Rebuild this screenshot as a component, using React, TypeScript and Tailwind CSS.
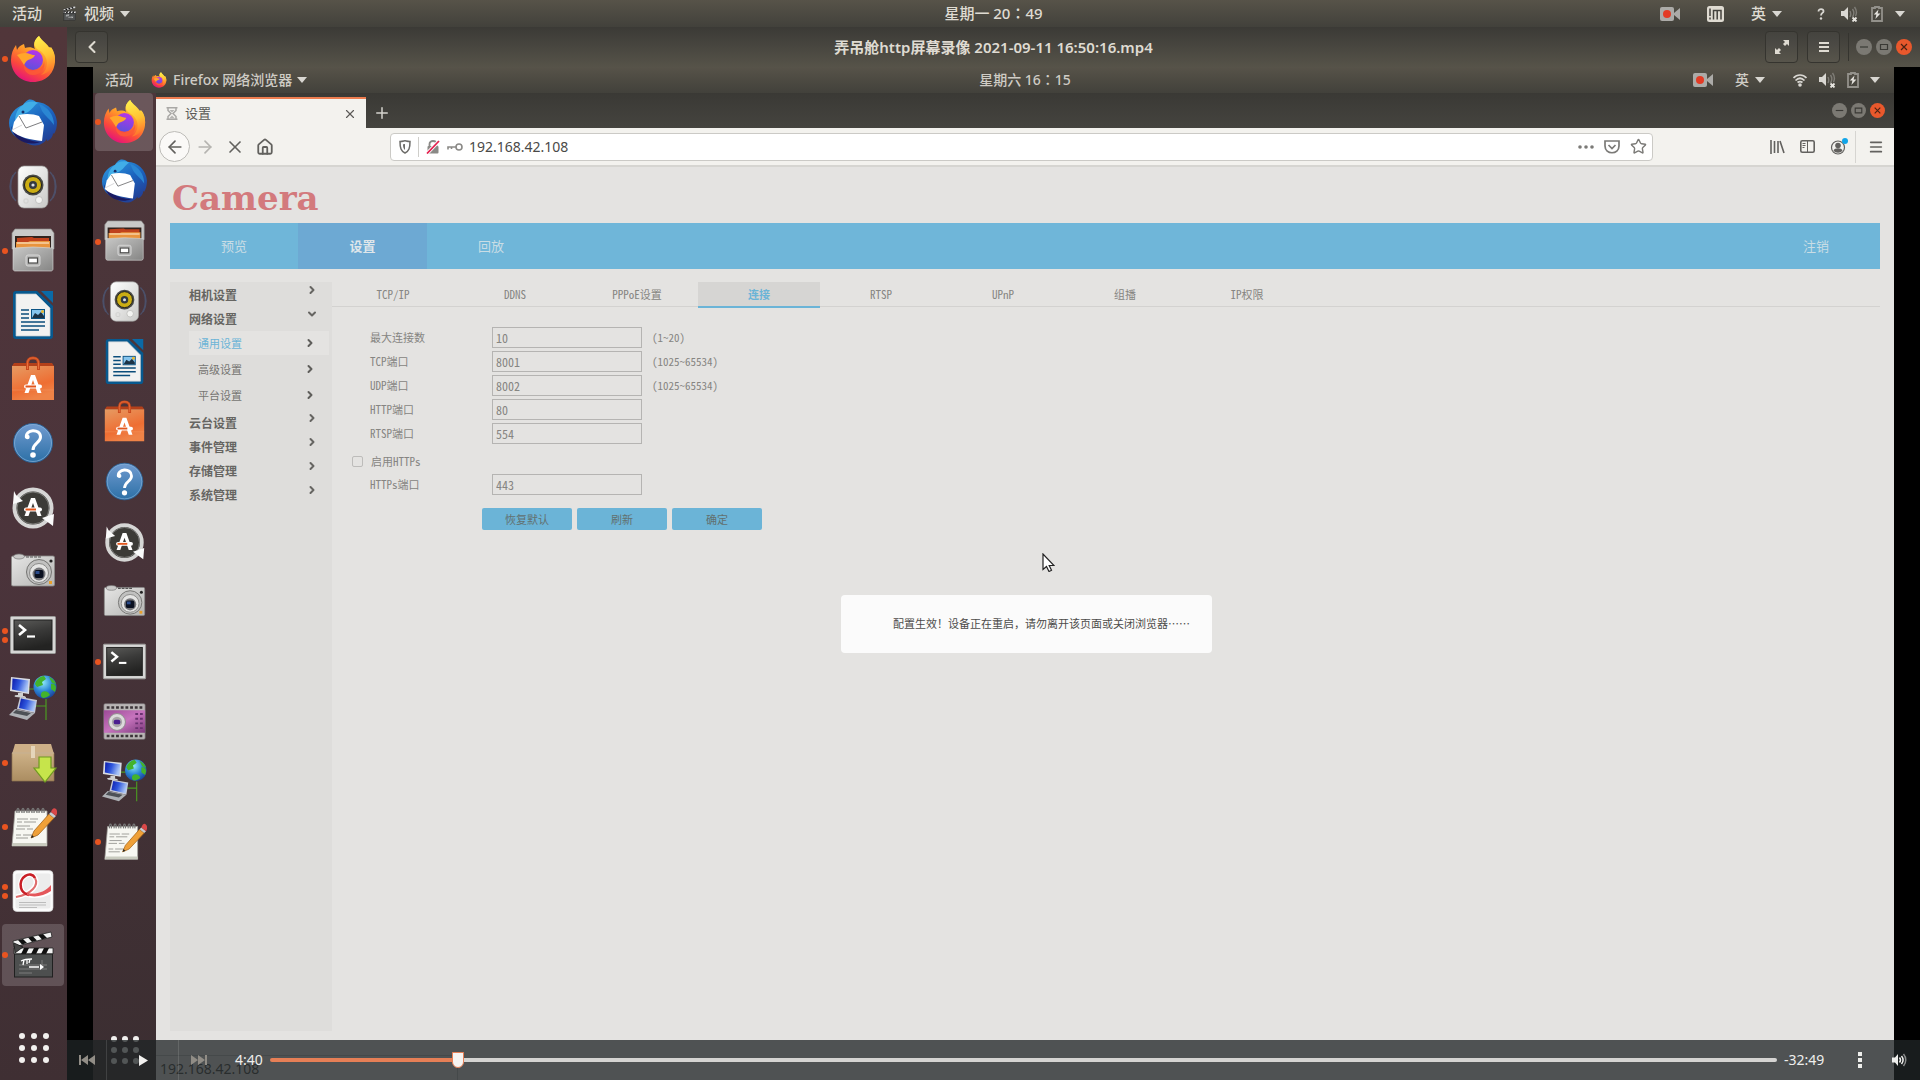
import type { ReactNode } from "react";
import {
  ArrowLeft,
  ArrowRight,
  ChevronDown,
  ChevronLeft,
  ChevronRight,
  House,
  Menu,
  Plus,
  Star,
  X,
} from "lucide-react";

function Icon48({ children }: { children: ReactNode }) {
  return (
    <svg viewBox="0 0 48 48" className="h-full w-full" aria-hidden="true">
      {children}
    </svg>
  );
}

function FirefoxIcon() {
  return (
    <Icon48>
      <defs>
        <linearGradient id="ffBody" x1="0.75" y1="0.1" x2="0.3" y2="1">
          <stop offset="0" stopColor="#ffe14a" />
          <stop offset="0.35" stopColor="#ff9a28" />
          <stop offset="0.7" stopColor="#fb4a3b" />
          <stop offset="1" stopColor="#e3107e" />
        </linearGradient>
        <linearGradient id="ffGlobe" x1="0.6" y1="0" x2="0.3" y2="1">
          <stop offset="0" stopColor="#b634e8" />
          <stop offset="1" stopColor="#5b52dd" />
        </linearGradient>
        <linearGradient id="ffFlame" x1="0" y1="0" x2="0.2" y2="1">
          <stop offset="0" stopColor="#fff44f" />
          <stop offset="0.6" stopColor="#ffc233" />
          <stop offset="1" stopColor="#ff7a2d" />
        </linearGradient>
      </defs>
      <path d="M24 47C11 47 2 37 2 25c0-6 2-11 5-15l1 5c1-3 4-5 7-6l1 4c3-1 7-1 10 1-2-4-1-9 4-13 2 5 7 7 9 12l2-1c4 4 5 9 5 13 0 13-9 22-22 22z" fill="url(#ffBody)" />
      <path d="M30 1c-5 4-6 9-2 13 6 3 10 8 10 14 0 5-2 9-6 12 8-2 13-8 14-15 0-5-1-9-4-13l-1 2C39 9 33 6 30 1z" fill="url(#ffFlame)" />
      <circle cx="24" cy="25" r="10" fill="url(#ffGlobe)" />
      <path d="M8 20c4-2 9-3 13-1 2 1 4 1 5 1-1 3-4 4-7 5-2 1-3 3-4 5-2-3-4-7-7-10z" fill="#ffa62b" />
      <path d="M15 29c2 6 8 8 13 6 4-1 7-5 7-9 2 7-3 14-11 14-6 0-10-5-9-11z" fill="#fb5a36" opacity="0.85" />
    </Icon48>
  );
}

function MailIcon() {
  return (
    <Icon48>
      <defs>
        <linearGradient id="tbBlue" x1="0.2" y1="0" x2="0.8" y2="1">
          <stop offset="0" stopColor="#2f9ae0" />
          <stop offset="0.5" stopColor="#1b62bd" />
          <stop offset="1" stopColor="#243a8f" />
        </linearGradient>
      </defs>
      <path d="M19 1c3-1 6 0 8 2 11 0 20 9 21 20 0 5-1 9-3 12l-1-1c0 4-3 7-6 8l0-2c-2 3-5 5-8 6-5 1-10 0-14-3C6 39 0 33 0 24 0 15 7 8 14 6c1-2 3-4 5-5z" fill="url(#tbBlue)" />
      <path d="M14 6c3-3 9-5 15-2-4 2-5 6-10 9-4 2-9 3-13 9 0-7 3-13 8-16z" fill="#41aee8" />
      <path d="M30 5c9 3 15 11 15 21-4-6-9-9-12-14z" fill="#2a86d3" />
      <path d="M2 27c4 9 15 15 29 16-10 4-26 1-29-16z" fill="#1a1a62" />
      <path d="M5 23l5-7c7-2 15-1 20 1l5 9-2 16C22 41 9 38 3 32z" fill="#fff" />
      <path d="M10 17l7 12 16-6" fill="none" stroke="#6d6d70" strokeWidth="0.9" />
      <path d="M3 31l10-5" fill="none" stroke="#c9c9cc" strokeWidth="0.8" />
      <circle cx="14" cy="13" r="1.5" fill="#16306d" />
    </Icon48>
  );
}

function MusicIcon() {
  return (
    <Icon48>
      <defs>
        <linearGradient id="spkBody" x1="0" y1="0" x2="1" y2="1">
          <stop offset="0" stopColor="#fff" />
          <stop offset="1" stopColor="#c9c9c7" />
        </linearGradient>
      </defs>
      <path d="M7 9C0 16 0 31 7 38M4 12c-4 7-4 16 0 23M41 9c7 7 7 22 0 29M44 12c4 7 4 16 0 23" fill="none" stroke="#4d668f" strokeWidth="1.4" opacity="0.55" />
      <rect x="9" y="3" width="30" height="42" rx="6" fill="url(#spkBody)" stroke="#9a9a98" strokeWidth="0.7" />
      <circle cx="24" cy="22" r="10.5" fill="#4b4c48" />
      <circle cx="24" cy="22" r="8.5" fill="#cbad13" stroke="#20201c" strokeWidth="1" />
      <circle cx="24" cy="22" r="4" fill="#333a40" />
      <circle cx="24" cy="22" r="1.6" fill="#dce2e5" />
      <circle cx="30" cy="37" r="3.5" fill="#f3f3f1" stroke="#b9b9b7" strokeWidth="0.8" />
      <rect x="15" y="36" width="4" height="4" rx="1" fill="none" stroke="#d0d0ce" />
    </Icon48>
  );
}

function FilesIcon() {
  return (
    <Icon48>
      <defs>
        <linearGradient id="fileBody" x1="0" y1="0" x2="1" y2="1">
          <stop offset="0" stopColor="#c8c8c7" />
          <stop offset="1" stopColor="#858584" />
        </linearGradient>
      </defs>
      <path d="M6 2h36l3 4v16H3V6z" fill="#c9c9c8" stroke="#8b8b8a" strokeWidth="0.7" />
      <path d="M6 9h36v12H6z" fill="#30231e" />
      <path d="M8 11l15-1 2 1h15v4H8z" fill="#c0421d" />
      <path d="M7 15h12l2-1h20v7H7z" fill="#e9943d" />
      <path d="M8 16h32" stroke="#fff3df" strokeWidth="1" />
      <path d="M4 21l20-1 20 1v21c0 1-1 2-2 2H6c-1 0-2-1-2-2z" fill="url(#fileBody)" stroke="#dcdcdb" strokeWidth="0.6" />
      <rect x="17" y="28" width="14" height="11" rx="2" fill="#b5b5b4" stroke="#d8d8d7" />
      <rect x="19.5" y="31" width="9" height="5" fill="#fff" stroke="#4b4b4a" strokeWidth="1.2" />
    </Icon48>
  );
}

function WriterIcon() {
  return (
    <Icon48>
      <path d="M7 0h21l16 15v30c0 2-1 3-3 3H7c-2 0-3-1-3-3V3c0-2 1-3 3-3z" fill="#07598f" />
      <path d="M32 0h12v12z" fill="#0b6aa6" />
      <path d="M7 3h20l14 14v28H7z" fill="#f2f2f1" stroke="#c4c8cb" strokeWidth="0.7" />
      <path d="M12 19h8M12 23h8M12 27h8M12 31h24M12 35h24M12 39h18" stroke="#0b4d7b" strokeWidth="1.7" />
      <rect x="22.5" y="18.5" width="13" height="9" fill="#86c5ee" stroke="#0b5384" />
      <path d="M23 27l3-5 3 2 3-3 3 4v2z" fill="#1c3346" />
      <circle cx="33.5" cy="20.5" r="1.5" fill="#eab82c" />
    </Icon48>
  );
}

function LetterA() {
  return (
    <>
      <path d="M22 19h4L32.500 37h-4L24 24l-4.500 13h-4z" fill="#fff" />
      <rect x="15" y="28.500" width="18" height="4" rx="2" fill="#fff" />
      <rect x="16.5" y="29.500" width="10.5" height="2" fill="#e3561c" />
    </>
  );
}

function SoftwareIcon() {
  return (
    <Icon48>
      <defs>
        <linearGradient id="bagBody" x1="0" y1="0" x2="0.4" y2="1">
          <stop offset="0" stopColor="#e69b63" />
          <stop offset="0.7" stopColor="#ee6e33" />
          <stop offset="1" stopColor="#ef8347" />
        </linearGradient>
      </defs>
      <path d="M5 8h38l2 3H3z" fill="#b3401a" />
      <path d="M3 11h42v34H3z" fill="url(#bagBody)" />
      <path d="M18.500 15V9c0-5 2-6 5.500-6s5.500 1 5.500 6v6" fill="none" stroke="#c8481c" strokeWidth="3" />
      <path d="M18.500 14V9c0-5 2-6 5.500-6s5.500 1 5.500 6v5" fill="none" stroke="#e86e3a" strokeWidth="1" />
      <path d="M3 35h42" stroke="#f39560" strokeWidth="0.5" />
      <g transform="translate(0 1)">
        <LetterA />
      </g>
    </Icon48>
  );
}

function HelpIcon() {
  return (
    <Icon48>
      <defs>
        <linearGradient id="helpBody" x1="0" y1="0" x2="0" y2="1">
          <stop offset="0" stopColor="#719bd0" />
          <stop offset="1" stopColor="#2c70a6" />
        </linearGradient>
      </defs>
      <circle cx="24" cy="24" r="19.5" fill="url(#helpBody)" stroke="#2b5f92" />
      <circle cx="24" cy="24" r="18.5" fill="none" stroke="#86b2da" strokeWidth="0.7" />
      <path d="M17.500 19c-2-9 14-10 14-1 0 6-7.500 6-7.500 13" fill="none" stroke="#fff" strokeWidth="3" />
      <circle cx="18.500" cy="18" r="2.2" fill="#fff" />
      <circle cx="24" cy="36" r="2.8" fill="#fff" />
    </Icon48>
  );
}

function UpdaterIcon() {
  return (
    <Icon48>
      <circle cx="24" cy="25" r="18.500" fill="#3c3b37" stroke="#d6d6d5" strokeWidth="4" />
      <circle cx="24" cy="25" r="16" fill="none" stroke="#8a8a88" strokeWidth="0.8" />
      <path d="M5 8l2 4 7 6-3 1-7 2z" fill="#fafafa" />
      <path d="M45 31l-1 12-4-3-7-5z" fill="#fafafa" />
      <g transform="translate(0 -4)">
        <LetterA />
      </g>
    </Icon48>
  );
}

function CameraIcon() {
  return (
    <Icon48>
      <defs>
        <linearGradient id="camBody" x1="0" y1="0" x2="1" y2="1">
          <stop offset="0" stopColor="#e6e6e5" />
          <stop offset="1" stopColor="#b4b4b2" />
        </linearGradient>
      </defs>
      <rect x="2.500" y="9" width="43" height="30" rx="1.5" fill="url(#camBody)" stroke="#8a8a88" strokeWidth="0.8" />
      <ellipse cx="10" cy="9.5" rx="5.5" ry="2.5" fill="#c9c9c8" stroke="#777" strokeWidth="0.7" />
      <path d="M17 10h15" stroke="#555" strokeWidth="1.2" strokeDasharray="3 1" />
      <circle cx="30" cy="25" r="12.5" fill="#c1c1c0" stroke="#747472" />
      <circle cx="30" cy="26" r="9.5" fill="#e5e5e4" stroke="#8b8b89" />
      <circle cx="30" cy="27" r="6.5" fill="#77777a" />
      <rect x="25.5" y="23" width="9" height="8" rx="2" fill="#0a1020" />
      <rect x="26.5" y="24" width="4" height="3" fill="#2a4b8a" />
      <circle cx="42" cy="14" r="1.6" fill="#222" />
      <rect x="40" y="34" width="3" height="3" fill="#e9a02b" />
    </Icon48>
  );
}

function TerminalIcon() {
  return (
    <Icon48>
      <defs>
        <linearGradient id="termBody" x1="0" y1="0" x2="0.3" y2="1">
          <stop offset="0" stopColor="#5a5a58" />
          <stop offset="0.5" stopColor="#3a3a39" />
          <stop offset="1" stopColor="#232322" />
        </linearGradient>
      </defs>
      <rect x="1.5" y="5.5" width="45" height="37" rx="1" fill="#d6d6d5" stroke="#9a9a98" />
      <rect x="5" y="9" width="38" height="30" fill="url(#termBody)" stroke="#1f1f1e" />
      <path d="M10 14l6 5-6 5" fill="none" stroke="#fff" strokeWidth="2.6" />
      <path d="M18 25.5h8" stroke="#fff" strokeWidth="2.2" />
    </Icon48>
  );
}

function NetworkIcon() {
  return (
    <Icon48>
      <defs>
        <linearGradient id="netScreen" x1="0" y1="0" x2="1" y2="0.3">
          <stop offset="0" stopColor="#0a18a8" />
          <stop offset="0.5" stopColor="#2f57dd" />
          <stop offset="1" stopColor="#a9c4f5" />
        </linearGradient>
        <radialGradient id="netGlobe" cx="0.4" cy="0.3" r="0.8">
          <stop offset="0" stopColor="#8feaf7" />
          <stop offset="0.5" stopColor="#2c86d6" />
          <stop offset="1" stopColor="#17348d" />
        </radialGradient>
      </defs>
      <path d="M18 14h7M37 24v21M27 31h10" stroke="#4b9a22" strokeWidth="1.2" fill="none" />
      <path d="M2 2l19 2-1 15-19-3z" fill="#d8dbe2" />
      <path d="M3.5 3.5l16 2-1 12-15.5-3z" fill="url(#netScreen)" />
      <path d="M9 18h5v3c3 0 4 2 2 2l-9-1c-3-1-1-2 2-2z" fill="#cfd0d0" />
      <path d="M11 22l17 3-2 13-18-4z" fill="#c5cad8" />
      <path d="M12 23.5l15 3-2 10-15-3.5z" fill="url(#netScreen)" />
      <path d="M6 34l20 4-8 7-18-5z" fill="#aeb1b5" />
      <path d="M7 35l15 3-4 3-14-3z" fill="#4d5156" />
      <circle cx="36" cy="12" r="11.5" fill="url(#netGlobe)" />
      <path d="M26 9c1-4 5-8 9-8l2 3-4 3 1 3-6 2zM40 2c3 1 6 4 7 7l-4-1zM33 17c3-2 7 0 8 3-2 2-5 3-7 3-2-1-3-3-1-6zM42 9c3-1 5 1 5 4l-1 4-4-3z" fill="#43b32b" />
    </Icon48>
  );
}

function PackageIcon() {
  return (
    <Icon48>
      <defs>
        <linearGradient id="pkgBody" x1="0" y1="0" x2="0" y2="1">
          <stop offset="0" stopColor="#cdb187" />
          <stop offset="1" stopColor="#ab8d61" />
        </linearGradient>
      </defs>
      <path d="M6 5h36l3 10H3z" fill="#cdaf87" />
      <path d="M3 14h42v28H3z" fill="url(#pkgBody)" stroke="#917650" strokeWidth="0.7" />
      <path d="M3 14h42" stroke="#e4d1b2" strokeWidth="0.8" />
      <path d="M22 7h4v12h-4z" fill="#e5d5ba" />
      <path d="M30 18h12v11h5L36 43 25 29h5z" fill="#c6e44b" stroke="#6f9a21" strokeWidth="1.2" />
    </Icon48>
  );
}

function NotesIcon() {
  return (
    <Icon48>
      <path d="M6 8h32v35H3z" fill="#f7f7f2" stroke="#a3a39d" strokeWidth="0.8" />
      <path d="M4 40h34v3H3z" fill="#c9cbbf" />
      <path d="M8 10c-1-6 3-6 2 0M13 10c-1-6 3-6 2 0M18 10c-1-6 3-6 2 0M23 10c-1-6 3-6 2 0M28 10c-1-6 3-6 2 0M33 10c-1-6 3-6 2 0" fill="none" stroke="#777" strokeWidth="1.3" />
      <path d="M8 16h11m2 0h8M8 19h5m2 0h12M8 23h13M7 26h9m2 0h6M7 32h5m2 0h12M7 35h12" stroke="#9c9c97" strokeWidth="1" />
      <path d="M22 35l3-7 15-17 5 4-16 17z" fill="#efa038" stroke="#a5651a" strokeWidth="0.8" />
      <path d="M40 11l2-2 5 4-2 2z" fill="#c8ccd0" />
      <path d="M42 9c1-3 3-5 5-3 2 2 1 5 0 7z" fill="#d94849" />
      <path d="M22 35l1-3 2 2z" fill="#222" />
    </Icon48>
  );
}

function PdfIcon() {
  return (
    <Icon48>
      <rect x="4" y="3.5" width="40" height="41" rx="4" fill="#fbfbfb" stroke="#d5d5d5" strokeWidth="0.7" />
      <rect x="6.5" y="6.5" width="35" height="35" rx="2" fill="#ececec" />
      <path d="M7 30c16-3 23-12 19-19C22 3 9 10 12 21c2 9 17 10 30 3" fill="none" stroke="#fff" strokeWidth="5" />
      <path d="M7 30c16-3 23-12 19-19" fill="none" stroke="#df6d6d" strokeWidth="2" />
      <path d="M26 11C22 3 9 10 12 21c1 4 4 6 8 7" fill="none" stroke="#c91f26" strokeWidth="2.6" />
      <path d="M18 26c9 2 18-1 24-8v6c-7 5-17 7-24 4z" fill="#e4575b" />
      <path d="M10 35.5h27M10 38h27M10 40.5h18" stroke="#bcbcbc" strokeWidth="1" />
    </Icon48>
  );
}

function ClapperIcon() {
  return (
    <Icon48>
      <path d="M4 10L42 1l1 5L5 16z" fill="#f2f2f2" stroke="#222" strokeWidth="0.8" />
      <path d="M9 9l5-1 4 4-5 1.500zM19 6.500l5-1 4 4-5 1.500zM29 4l5-1 4 4-5 1.500z" fill="#111" />
      <path d="M5 17h39v6H5z" fill="#f2f2f2" stroke="#222" strokeWidth="0.8" />
      <path d="M15 17h5l-3 6h-5zM25 17h5l-3 6h-5zM35 17h5l-3 6h-5z" fill="#111" />
      <path d="M5 12l9 4-8 6z" fill="#454545" stroke="#161616" strokeWidth="0.8" />
      <rect x="5.5" y="23" width="38" height="23" fill="#4d4f4f" stroke="#202020" />
      <path d="M10 34h28M10 38h28M10 42h13M33 29v5" stroke="#888" strokeWidth="0.8" />
      <path d="M12 30c4-2 7-2 11-2M15 29l-1 5M18 29v4M21 28l-1 4M20 36h10" stroke="#fff" strokeWidth="1.3" fill="none" />
      <path d="M31 33l4 3-4 3z" fill="#fff" />
    </Icon48>
  );
}

function FilmIcon() {
  return (
    <Icon48>
      <defs>
        <linearGradient id="filmBody" x1="0" y1="0" x2="1" y2="1">
          <stop offset="0" stopColor="#9c4a96" />
          <stop offset="0.5" stopColor="#c673bd" />
          <stop offset="1" stopColor="#7d3a7c" />
        </linearGradient>
      </defs>
      <rect x="2" y="5" width="44" height="38" rx="1.5" fill="#b9b5b5" stroke="#7a7678" strokeWidth="0.7" />
      <rect x="2" y="12" width="44" height="24" fill="url(#filmBody)" />
      <path d="M5 9h38M5 39.5h38" stroke="#3b3438" strokeWidth="2.6" strokeDasharray="3 2" />
      <path d="M37 15v20M42 15v20" stroke="#6b3272" strokeWidth="3" strokeDasharray="2 3" />
      <circle cx="16" cy="24.5" r="9" fill="#dcdadb" stroke="#8c8889" />
      <circle cx="16" cy="24.5" r="5.5" fill="#a8a4a7" />
      <rect x="12.5" y="22" width="7" height="5" rx="2" fill="#4b1e8f" />
    </Icon48>
  );
}

type DockItem = { name: string; icon: ReactNode; dots?: number; active?: boolean };

const hostDock: DockItem[] = [
  { name: "Firefox", icon: <FirefoxIcon />, dots: 1 },
  { name: "Thunderbird", icon: <MailIcon /> },
  { name: "Rhythmbox", icon: <MusicIcon /> },
  { name: "Files", icon: <FilesIcon />, dots: 1 },
  { name: "Writer", icon: <WriterIcon /> },
  { name: "Software", icon: <SoftwareIcon /> },
  { name: "Help", icon: <HelpIcon /> },
  { name: "Updater", icon: <UpdaterIcon /> },
  { name: "Screenshot", icon: <CameraIcon /> },
  { name: "Terminal", icon: <TerminalIcon />, dots: 2 },
  { name: "Network", icon: <NetworkIcon /> },
  { name: "Installer", icon: <PackageIcon />, dots: 1 },
  { name: "Text Editor", icon: <NotesIcon />, dots: 1 },
  { name: "Document Viewer", icon: <PdfIcon />, dots: 2 },
  { name: "Videos", icon: <ClapperIcon />, dots: 1, active: true },
];

const guestDock: DockItem[] = [
  { name: "Firefox", icon: <FirefoxIcon />, dots: 1, active: true },
  { name: "Thunderbird", icon: <MailIcon /> },
  { name: "Files", icon: <FilesIcon />, dots: 1 },
  { name: "Rhythmbox", icon: <MusicIcon /> },
  { name: "Writer", icon: <WriterIcon /> },
  { name: "Software", icon: <SoftwareIcon /> },
  { name: "Help", icon: <HelpIcon /> },
  { name: "Updater", icon: <UpdaterIcon /> },
  { name: "Screenshot", icon: <CameraIcon /> },
  { name: "Terminal", icon: <TerminalIcon />, dots: 1 },
  { name: "Screen Recorder", icon: <FilmIcon /> },
  { name: "Network", icon: <NetworkIcon /> },
  { name: "Text Editor", icon: <NotesIcon />, dots: 1 },
];

function Dock({ items, small }: { items: DockItem[]; small?: boolean }) {
  return (
    <aside
      className={
        small
          ? "flex w-[63px] shrink-0 flex-col bg-linear-to-b from-[#4d363a] via-[#473339] to-[#3b2e31]"
          : "flex w-[67px] shrink-0 flex-col bg-linear-to-b from-[#51363a] via-[#4b343b] to-[#3f2f33]"
      }
    >
      {items.map((item) => (
        <button
          key={item.name}
          aria-label={item.name}
          className={`relative flex w-full items-center justify-center pr-px ${small ? "h-[60px] pb-[3px]" : "h-16"}`}
        >
          {item.active && (
            <span className={`absolute left-[2px] right-[3px] rounded bg-white/17 ${small ? "top-0 bottom-[2px]" : "inset-y-px"}`} />
          )}
          <span className="absolute left-[2px] flex flex-col gap-[3px]">
            {Array.from({ length: item.dots ?? 0 }, (_, i) => (
              <span key={i} className="h-[6px] w-[6px] rounded-full bg-[#e95420]" />
            ))}
          </span>
          <span className={small ? "relative h-[45px] w-[45px]" : "relative h-12 w-12"}>{item.icon}</span>
        </button>
      ))}
      <button
        aria-label="Show Applications"
        className={`mx-auto mt-auto grid grid-cols-3 ${small ? "mb-4 gap-[5px]" : "mb-[17px] gap-[6px]"}`}
      >
        {Array.from({ length: 9 }, (_, i) => (
          <span key={i} className="h-[6px] w-[6px] rounded-full bg-[#f2f0ee]" />
        ))}
      </button>
    </aside>
  );
}

function Caret() {
  return (
    <svg viewBox="0 0 10 6" className="h-[6px] w-[10px] shrink-0" aria-hidden="true">
      <path d="M0 0h10L5 6z" fill="#d9d7d2" />
    </svg>
  );
}

function RecordIcon() {
  return (
    <svg viewBox="0 0 20 14" className="h-[14px] w-5 shrink-0" aria-hidden="true">
      <rect width="14" height="14" rx="2" fill="#acaba8" />
      <path d="M14 6l6-5v12l-6-5z" fill="#acaba8" />
      <circle cx="7" cy="7" r="4" fill="#e33b25" />
    </svg>
  );
}

function InputMethodIcon() {
  return (
    <svg viewBox="0 0 17 16" className="h-4 w-[17px] shrink-0" aria-hidden="true">
      <rect width="17" height="16" rx="2.5" fill="#dfdbd2" />
      <path d="M3 2.500v7.500M3 11.500v2M6.500 13.500V4.500H14v9M10.200 4.500v9" stroke="#45433e" strokeWidth="1.5" fill="none" />
    </svg>
  );
}

function MutedIcon() {
  return (
    <svg viewBox="0 0 17 16" className="h-4 w-[17px] shrink-0" aria-hidden="true">
      <path d="M0 5h3l4-4v13l-4-4H0z" fill="#d9d7d2" />
      <path d="M9 5c1 2 1 4 0 6M11.500 3c2 3 2 5 0 8M13.500 1c3 4 2 7 1 9" stroke="#7f7d77" strokeWidth="1.4" fill="none" />
      <path d="M11.500 11.500l4 4M15.500 11.500l-4 4" stroke="#e6e4df" strokeWidth="1.8" />
    </svg>
  );
}

function BatteryIcon() {
  return (
    <svg viewBox="0 0 12 16" className="h-4 w-3 shrink-0" aria-hidden="true">
      <path d="M4 2V1h4v1h3v13H1V2z" fill="none" stroke="#93918b" strokeWidth="1.8" />
      <path d="M7.500 3.500L2.800 8.500h2.600l-1 4.500 5-5.500H6.600z" fill="#e6e4df" />
    </svg>
  );
}

function HelpMark() {
  return (
    <svg viewBox="0 0 10 12" className="h-3 w-[10px] shrink-0" aria-hidden="true">
      <path d="M2.500 3.500c0-3.500 5.500-3 5 0C7.200 5 5 5 5 7.500" fill="none" stroke="#d9d7d2" strokeWidth="1.8" />
      <circle cx="5" cy="10.5" r="1.2" fill="#d9d7d2" />
    </svg>
  );
}

function WifiIcon() {
  return (
    <svg viewBox="0 0 14 13" className="h-[13px] w-[14px] shrink-0" aria-hidden="true">
      <path d="M0.500 4C4 0 10 0 13.500 4M2.500 6.500c3-3 6-3 9 0M4.500 8.500c2-1.500 3-1.500 5 0" fill="none" stroke="#d9d7d2" strokeWidth="1.7" />
      <circle cx="7" cy="11" r="1.8" fill="#d9d7d2" />
    </svg>
  );
}

function WindowButtons({ small }: { small?: boolean }) {
  const size = small ? "h-[15px] w-[15px]" : "h-4 w-4";
  return (
    <div className="flex gap-1">
      <button aria-label="Minimize" className={`${size} rounded-full bg-[#7b7973]`}>
        <svg viewBox="0 0 16 16"><path d="M4 8h8" stroke="#3a3935" strokeWidth="1.2" /></svg>
      </button>
      <button aria-label="Maximize" className={`${size} rounded-full bg-[#7b7973]`}>
        <svg viewBox="0 0 16 16"><path d="M4.500 5.500h7v5h-7z" fill="none" stroke="#3a3935" strokeWidth="1.2" /></svg>
      </button>
      <button aria-label="Close" className={`${size} rounded-full bg-[#e9582c]`}>
        <svg viewBox="0 0 16 16"><path d="M5 5l6 6M11 5l-6 6" stroke="#4b2212" strokeWidth="1.2" /></svg>
      </button>
    </div>
  );
}

function HostBar() {
  return (
    <header className="grid h-[27px] shrink-0 grid-cols-[1fr_auto_1fr] items-center bg-linear-to-b from-[#575349] to-[#42413b] pl-[67px] text-[15px] leading-none font-medium text-[#dfdbd2]">
      <div className="-ml-[55px] flex items-center">
        <button>活动</button>
        <button className="ml-5 flex items-center">
          <span className="mr-[7px] h-[15px] w-[15px]"><ClapperIcon /></span>
          视频
          <span className="ml-[6px]"><Caret /></span>
        </button>
      </div>
      <span className="font-['Noto_Sans','Noto_Sans_CJK_TC',sans-serif]">星期一 20：49</span>
      <div className="flex items-center justify-end pr-[15px]">
        <RecordIcon />
        <span className="ml-[27px]"><InputMethodIcon /></span>
        <button className="ml-[27px] flex items-center gap-[6px]">英<Caret /></button>
        <span className="ml-[34px]"><HelpMark /></span>
        <span className="ml-[15px]"><MutedIcon /></span>
        <span className="ml-[13px]"><BatteryIcon /></span>
        <span className="ml-3"><Caret /></span>
      </div>
    </header>
  );
}

function VideoTitleBar() {
  const button = "flex h-8 w-[33px] items-center justify-center rounded border border-[#35342f] bg-white/3 text-[#dfdbd2]";
  return (
    <div className="grid h-10 shrink-0 grid-cols-[1fr_auto_1fr] items-center bg-linear-to-b from-[#3b3a36] to-[#565349] pr-2 pl-2">
      <div>
        <button aria-label="Back" className={button}>
          <ChevronLeft className="h-5 w-5" strokeWidth={2.5} />
        </button>
      </div>
      <h1 className="text-[15px] leading-none font-semibold text-[#dfdbd2]">弄吊舱http屏幕录像 2021-09-11 16:50:16.mp4</h1>
      <div className="flex items-center justify-end">
        <button aria-label="Fullscreen" className={button}>
          <svg viewBox="0 0 14 14" className="h-[14px] w-[14px]">
            <path d="M8 0h6v6l-2-2-2 2-2-2 2-2zM0 8l2 2 2-2 2 2-2 2 2 2H0z" fill="#dfdbd2" />
          </svg>
        </button>
        <button aria-label="Menu" className={`ml-[9px] ${button}`}>
          <svg viewBox="0 0 10 10" className="h-[10px] w-[10px]">
            <path d="M0 1h10M0 5h10M0 9h10" stroke="#dfdbd2" strokeWidth="2" />
          </svg>
        </button>
        <div className="mr-[7px] ml-2 h-7 w-px bg-[#35342f]" />
        <WindowButtons />
      </div>
    </div>
  );
}

function GuestBar() {
  return (
    <div className="grid h-[26px] shrink-0 grid-cols-[1fr_auto_1fr] items-center bg-linear-to-b from-[#575349] to-[#42413b] pl-[63px] text-[14px] leading-none font-medium text-[#cfccc5]">
      <div className="-ml-[51px] flex items-center">
        <button>活动</button>
        <button className="ml-[18px] flex items-center">
          <span className="mr-[6px] h-4 w-4"><FirefoxIcon /></span>
          Firefox 网络浏览器
          <span className="ml-[5px]"><Caret /></span>
        </button>
      </div>
      <span className="font-['Noto_Sans','Noto_Sans_CJK_TC',sans-serif]">星期六 16：15</span>
      <div className="flex items-center justify-end pr-[14px]">
        <RecordIcon />
        <button className="ml-[22px] flex items-center gap-[6px]">英<Caret /></button>
        <span className="ml-[28px]"><WifiIcon /></span>
        <span className="ml-3"><MutedIcon /></span>
        <span className="ml-[11px]"><BatteryIcon /></span>
        <span className="ml-[11px]"><Caret /></span>
      </div>
    </div>
  );
}

function BrowserChrome() {
  return (
    <>
      <div className="flex h-[35px] shrink-0 items-end bg-linear-to-b from-[#3a3935] to-[#45443f] pr-[9px]">
        <div className="flex h-[31px] w-[210px] items-center border-t-2 border-[#ee7d50] bg-[#f3f2ee] pr-[9px] pl-[10px] text-[13px] text-[#5b5a57]">
          <svg viewBox="0 0 12 13" className="h-[13px] w-3" aria-hidden="true">
            <path d="M0.500 0.800h11M0.500 12.200h11M2 1v2.500l3 3-3 3V12M10 1v2.500l-3 3 3 3V12" fill="none" stroke="#a9a8a5" strokeWidth="1.5" />
            <path d="M3.500 3h5L6 5.500zM3 11.500l3-3 3 3z" fill="#b5b4b1" />
          </svg>
          <span className="ml-[7px] flex-1">设置</span>
          <button aria-label="Close tab"><X className="h-[14px] w-[14px]" /></button>
        </div>
        <button aria-label="New tab" className="ml-[7px] flex h-[31px] items-center text-[#d5d3ce]">
          <Plus className="h-[18px] w-[18px]" />
        </button>
        <div className="ml-auto flex h-[35px] items-center"><WindowButtons small /></div>
      </div>
      <div className="flex h-[39px] shrink-0 items-center border-b-2 border-[#d6d5d1] bg-[#f3f2ee] pr-[10px] pl-[3px] text-[#62615e]">
        <button aria-label="Back" className="flex h-[31px] w-[31px] items-center justify-center rounded-full border border-[#bdbcb8] bg-[#faf9f7]">
          <ArrowLeft className="h-5 w-5" />
        </button>
        <button aria-label="Forward" className="ml-[5px] text-[#b5b4b0]"><ArrowRight className="h-5 w-5" /></button>
        <button aria-label="Stop" className="ml-[10px]"><X className="h-5 w-5" /></button>
        <button aria-label="Home" className="ml-[11px]"><House className="h-[18px] w-[18px]" strokeWidth={2.4} /></button>
        <div className="ml-[116px] flex h-7 flex-1 items-center rounded border border-[#cbcac6] bg-white pr-[5px] pl-2">
          <svg viewBox="0 0 12 14" className="h-[14px] w-3">
            <path d="M1 1.500c3 0 4-.7 5-.7s2 .7 5 .7C11 8 10 11 6 13 2 11 1 8 1 1.500z" fill="none" stroke="#6d6c69" strokeWidth="1.5" />
            <path d="M6 4v6C4.500 9 4 7 4 4.200z" fill="#6d6c69" />
          </svg>
          <div className="mx-[7px] h-5 w-px bg-[#cfceca]" />
          <svg viewBox="0 0 14 14" className="h-[14px] w-[14px]">
            <path d="M3.500 6V4c0-4 7-4 7 0v2" fill="none" stroke="#8a8986" strokeWidth="1.8" />
            <rect x="1.5" y="6" width="11" height="7.5" rx="1" fill="#8a8986" />
            <path d="M1 13.500L13 1" stroke="#fff" strokeWidth="3.5" />
            <path d="M1 13.500L13 1" stroke="#e4224f" strokeWidth="1.8" />
          </svg>
          <svg viewBox="0 0 16 8" className="ml-[7px] h-2 w-4">
            <circle cx="12" cy="4" r="3" fill="none" stroke="#8a8986" strokeWidth="1.6" />
            <path d="M9 4H1v2.500M4.500 4v2" fill="none" stroke="#8a8986" strokeWidth="1.6" />
          </svg>
          <input aria-label="Address" defaultValue="192.168.42.108" className="ml-[6px] min-w-0 flex-1 bg-transparent text-[14px] text-[#4a4947] outline-none" />
          <button aria-label="Page actions">
            <svg viewBox="0 0 16 4" className="h-1 w-4">
              <circle cx="2" cy="2" r="1.8" fill="#7b7a77" />
              <circle cx="8" cy="2" r="1.8" fill="#7b7a77" />
              <circle cx="14" cy="2" r="1.8" fill="#7b7a77" />
            </svg>
          </button>
          <button aria-label="Pocket" className="ml-[10px]">
            <svg viewBox="0 0 16 14" className="h-[14px] w-4">
              <path d="M1 1h14v5c0 9-14 9-14 0z" fill="none" stroke="#7b7a77" strokeWidth="1.7" />
              <path d="M4.500 5L8 8.500 11.500 5" fill="none" stroke="#7b7a77" strokeWidth="1.7" />
            </svg>
          </button>
          <button aria-label="Bookmark" className="ml-[10px]"><Star className="h-[17px] w-[17px] text-[#7b7a77]" /></button>
        </div>
        <button aria-label="Library" className="ml-[117px]">
          <svg viewBox="0 0 15 14" className="h-[14px] w-[15px]">
            <path d="M1 0v14M4.500 1v12M8 1v12M10 1l4 12" stroke="#62615e" strokeWidth="1.6" fill="none" />
          </svg>
        </button>
        <button aria-label="Sidebars" className="ml-[15px]">
          <svg viewBox="0 0 15 13" className="h-[13px] w-[15px]">
            <rect x="0.8" y="0.8" width="13.4" height="11.4" rx="1.5" fill="none" stroke="#62615e" strokeWidth="1.6" />
            <path d="M7.500 1v11M2.500 3.500h3M2.500 5.500h3M2.500 7.500h2" stroke="#62615e" fill="none" />
          </svg>
        </button>
        <button aria-label="Account" className="ml-[15px]">
          <svg viewBox="0 0 18 18" className="h-[18px] w-[18px]">
            <circle cx="8" cy="9.500" r="6.5" fill="none" stroke="#62615e" strokeWidth="1.2" />
            <circle cx="8" cy="7.500" r="2.8" fill="#62615e" />
            <path d="M3.500 12.500c1-3 8-3 9 0-2 3-7 3-9 0z" fill="#62615e" />
            <circle cx="15" cy="3" r="3" fill="#12a5e8" />
          </svg>
        </button>
        <div className="ml-[7px] h-8 w-px bg-[#d6d5d1]" />
        <button aria-label="Open menu" className="ml-3"><Menu className="h-4 w-4" strokeWidth={2.5} /></button>
      </div>
    </>
  );
}

const sideItem = "flex h-6 w-full items-center justify-between pr-[14px] text-[12px] font-bold text-[#666562]";

function SideMenu() {
  return (
    <nav className="w-[162px] shrink-0 bg-[#dedddb] pt-px pl-[19px]">
      {["相机设置", "网络设置"].map((name, i) => (
        <button key={name} className={sideItem}>
          {name}
          {i === 0 ? <ChevronRight className="mb-[10px] h-3 w-3" strokeWidth={4} /> : <ChevronDown className="mb-[10px] h-3 w-3" strokeWidth={4} />}
        </button>
      ))}
      <div className="flex flex-col gap-[2px] pr-[3px] pb-1">
        {["通用设置", "高级设置", "平台设置"].map((name, i) => (
          <button
            key={name}
            className={`flex h-6 items-center justify-between pr-[13px] pl-[9px] text-[11px] ${i === 0 ? "bg-[#e4e3e1] font-medium text-[#6bb4d7]" : "text-[#767572]"}`}
          >
            {name}
            <ChevronRight className="h-3 w-3 text-[#5f5e5b]" strokeWidth={4} />
          </button>
        ))}
      </div>
      {["云台设置", "事件管理", "存储管理", "系统管理"].map((name) => (
        <button key={name} className={sideItem}>
          {name}
          <ChevronRight className="mb-[10px] h-3 w-3" strokeWidth={4} />
        </button>
      ))}
    </nav>
  );
}

const tabs = ["TCP/IP", "DDNS", "PPPoE设置", "连接", "RTSP", "UPnP", "组播", "IP权限"];

function Field({ id, label, value, hint }: { id: string; label: string; value: string; hint?: string }) {
  return (
    <div className="flex h-[21px] items-center">
      <label htmlFor={id} className="w-[122px]">{label}</label>
      <input
        id={id}
        defaultValue={value}
        className="h-[21px] w-[150px] border border-[#b5b4b2] bg-transparent px-[3px] text-[12px] outline-none"
      />
      {hint && <span className="ml-[10px]">{hint}</span>}
    </div>
  );
}

function ConnectionForm() {
  return (
    <form className="pt-5 pl-[20px]">
      <div className="flex flex-col gap-[3px] pl-[18px]">
        <Field id="max" label="最大连接数" value="10" hint="(1~20)" />
        <Field id="tcp" label="TCP端口" value="8001" hint="(1025~65534)" />
        <Field id="udp" label="UDP端口" value="8002" hint="(1025~65534)" />
        <Field id="http" label="HTTP端口" value="80" />
        <Field id="rtsp" label="RTSP端口" value="554" />
      </div>
      <label className="mt-[7px] flex h-5 items-center gap-2">
        <input type="checkbox" className="h-[11px] w-[11px] appearance-none rounded-xs border border-[#bdbcba]" />
        启用HTTPs
      </label>
      <div className="mt-[3px] pl-[18px]">
        <Field id="https" label="HTTPs端口" value="443" />
      </div>
      <div className="mt-[13px] flex gap-[5px] pl-[130px]">
        {["恢复默认", "刷新", "确定"].map((name) => (
          <button key={name} type="button" className="h-[22px] w-[90px] rounded-xs bg-[#6bb4d7] text-[#62706f]">
            {name}
          </button>
        ))}
      </div>
    </form>
  );
}

function CameraPage() {
  return (
    <main className="relative flex flex-1 flex-col bg-[#e4e3e1] px-[14px] pb-[49px] font-['Noto_Sans_Mono_CJK_SC','Noto_Sans_CJK_SC',monospace] text-[11px] text-[#868582]">
      <div className="flex h-14 items-center pt-[5px] pl-[2px] font-['DejaVu_Serif',serif] text-[34px] leading-none font-bold text-[#d37a7d]">
        Camera
      </div>
      <nav className="flex h-[46px] shrink-0 bg-[#6fb6d9] text-[13px] text-[#c9dde5]">
        <button className="w-32">预览</button>
        <button className="w-[129px] bg-[#6da9d3] font-bold text-[#dfe6ea]">设置</button>
        <button className="w-32">回放</button>
        <button className="ml-auto w-32">注销</button>
      </nav>
      <div className="mt-[13px] flex flex-1">
        <SideMenu />
        <section className="flex-1">
          <div className="flex h-[25px] border-b border-[#d3d2d0]">
            {tabs.map((name) => (
              <button
                key={name}
                className={`w-[122px] ${name === "连接" ? "h-[26px] border-b-2 border-[#6bb4d7] bg-[#d6d5d3] font-bold text-[#6bb4d7]" : "h-6"}`}
              >
                {name}
              </button>
            ))}
          </div>
          <ConnectionForm />
        </section>
      </div>
      <div role="alert" className="absolute top-[428px] left-[calc(50%-184px)] flex h-[58px] w-[371px] items-center rounded bg-[#fbfbfb] pb-[2px] pl-[52px] whitespace-nowrap text-[#4d4c4a]">
        配置生效！设备正在重启，请勿离开该页面或关闭浏览器……
      </div>
      <svg viewBox="0 0 13 19" className="absolute top-[386px] left-[calc(50%+17px)] h-[19px] w-[13px]" aria-hidden="true">
        <path d="M1 1v15.500l3.500-3 2.500 5 2.500-1.200-2.300-4.800H12z" fill="#fff" stroke="#222" strokeWidth="1.2" />
      </svg>
      <div className="absolute bottom-0 left-0 flex h-[25px] w-[302px] items-center border-t border-r border-[#bdbcba] pl-1 font-['Noto_Sans',sans-serif] text-[14px] text-[#4a4947]">
        192.168.42.108
      </div>
    </main>
  );
}

const duration = 2249;
const position = 274;

function PlayerControls() {
  const played = `${(position / duration) * 100}%`;
  return (
    <div className="absolute inset-x-0 bottom-0 flex h-10 items-center bg-[rgb(31,37,38)]/76 pr-[13px] pl-3 text-[15px] text-[#eeeeec]">
      <button aria-label="Previous">
        <svg viewBox="0 0 16 10" className="h-[10px] w-4">
          <path d="M0 0h2v10H0zM9 0v10L2 5zM16 0v10L9 5z" fill="#918d86" />
        </svg>
      </button>
      <div className="ml-[11px] h-10 w-px bg-white/12" />
      <button aria-label="Play" className="ml-8">
        <svg viewBox="0 0 9 11" className="h-[11px] w-[9px]"><path d="M0 0l9 5.500L0 11z" fill="#f2f1ef" /></svg>
      </button>
      <div className="ml-[30px] h-10 w-px bg-white/12" />
      <button aria-label="Next" className="ml-3">
        <svg viewBox="0 0 16 10" className="h-[10px] w-4">
          <path d="M14 0h2v10h-2zM0 0v10l7-5zM7 0v10l7-5z" fill="#918d86" />
        </svg>
      </button>
      <span className="ml-7 w-[28px] pb-px text-[14px]">4:40</span>
      <input
        type="range"
        aria-label="Position"
        min={0}
        max={duration}
        defaultValue={position}
        style={{ backgroundImage: `linear-gradient(to right, #e67f56 ${played}, #d5d4d2 ${played})` }}
        className="ml-[7px] h-1 min-w-0 flex-1 appearance-none rounded-sm [&::-webkit-slider-thumb]:h-4 [&::-webkit-slider-thumb]:w-3 [&::-webkit-slider-thumb]:appearance-none [&::-webkit-slider-thumb]:rounded-t [&::-webkit-slider-thumb]:rounded-b-full [&::-webkit-slider-thumb]:border [&::-webkit-slider-thumb]:border-[#e67f56] [&::-webkit-slider-thumb]:bg-[#f6f4f2]"
      />
      <span className="ml-[7px] w-[42px] pb-px text-[14px]">-32:49</span>
      <button aria-label="More" className="ml-8 flex w-1 flex-col gap-[2px]">
        <span className="h-1 w-1 bg-[#eeeeec]" />
        <span className="h-1 w-1 bg-[#eeeeec]" />
        <span className="h-1 w-1 bg-[#eeeeec]" />
      </button>
      <button aria-label="Volume" className="ml-[30px]">
        <svg viewBox="0 0 15 14" className="h-[14px] w-[15px]">
          <path d="M0 4.500h3L6 1v12L3 9.500H0z" fill="#eeeeec" />
          <path d="M7.500 4.500c1.200 1.500 1.200 3.500 0 5M9.500 3c2 2.500 2 5.500 0 8" stroke="#eeeeec" strokeWidth="1.5" fill="none" />
          <path d="M11.500 1c3 3.500 3 8.500 0 12" stroke="#8a8c8c" strokeWidth="1.5" fill="none" />
        </svg>
      </button>
    </div>
  );
}

export default function App() {
  return (
    <div className="flex min-h-screen flex-col bg-black font-['Noto_Sans','Noto_Sans_CJK_SC',sans-serif]">
      <HostBar />
      <div className="flex flex-1">
        <Dock items={hostDock} />
        <div className="relative flex min-w-0 flex-1 flex-col">
          <VideoTitleBar />
          <div className="flex flex-1 flex-col bg-black px-[26px]">
            <GuestBar />
            <div className="flex flex-1">
              <Dock items={guestDock} small />
              <div className="flex min-w-0 flex-1 flex-col">
                <BrowserChrome />
                <CameraPage />
              </div>
            </div>
          </div>
          <PlayerControls />
        </div>
      </div>
    </div>
  );
}
